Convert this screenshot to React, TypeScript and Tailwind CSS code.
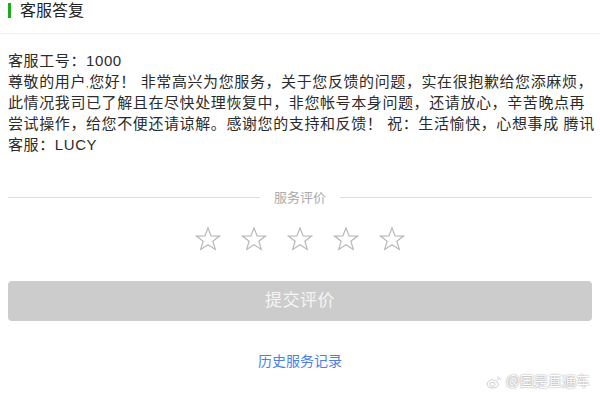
const FONT = { fontFamily: '"Liberation Sans", Arial, "Noto Sans CJK SC", sans-serif' };

/* ── Star outline ────────────────────────────────────────────── */
function StarOutline() {
  return (
    <svg width="26" height="26" viewBox="0 0 24 24" fill="none" stroke="#b8b8b8" strokeWidth="1.1" strokeLinejoin="miter">
      <polygon points="12,1.8 14.9,9.1 22.6,9.3 16.5,14.1 18.7,21.6 12,17.2 5.3,21.6 7.5,14.1 1.4,9.3 9.1,9.1" />
    </svg>
  );
}

/* ── Weibo watermark logo ────────────────────────────────────── */
function WeiboMark() {
  return (
    <svg width="16" height="14" viewBox="0 0 24 20" fill="none" stroke="#c8c8c8" strokeWidth="1.4">
      <path d="M9.5 6.5c-4.2 0.6-8 3.6-8 6.9 0 3.4 4.2 5.6 8.6 5.6 5.4 0 9-2.9 9-5.4 0-1.8-1.6-2.6-2.8-2.9 0.5-1.2 0.6-3-1.7-3.1-1.4 0-2.9 0.7-2.9 0.7s0.6-2.1-2.2-1.8z" />
      <ellipse cx="9.5" cy="13.4" rx="4.2" ry="3" />
      <path d="M17 2.5c2.4 0 4.6 2 4.6 4.6M16.8 5c1.2 0 2.2 0.9 2.2 2.1" />
    </svg>
  );
}

const REPLY_LINES = [
  "此情况我司已了解且在尽快处理恢复中，非您帐号本身问题，还请放心，辛苦晚点再",
  "尝试操作，给您不便还请谅解。感谢您的支持和反馈！ 祝：生活愉快，心想事成 腾讯",
  "客服：LUCY",
];

export default function App() {
  return (
    <div className="w-[600px] h-[400px] bg-white relative overflow-hidden text-[#333]" style={FONT}>
      {/* Header */}
      <div className="h-[34px] flex items-start pt-[3px] pl-2 border-b border-[#eeeeee]">
        <span className="w-[3px] h-[15px] bg-[#1aad19]" />
        <span className="ml-[9px] text-[16px] text-[#222] leading-[16px]">客服答复</span>
      </div>

      {/* Reply text */}
      <div className="px-2 pt-[16px] text-[15px] leading-[21px] tracking-[0.6px] text-[#2b2b2b] whitespace-nowrap">
        <div>客服工号：1000</div>
        <div className="h-[21px]">
          尊敬的用户<span className="text-[9px] leading-none">,</span>您好！ 非常高兴为您服务，关于您反馈的问题，实在很抱歉给您添麻烦，
        </div>
        {REPLY_LINES.map((line) => (
          <div key={line}>{line}</div>
        ))}
      </div>

      {/* Rating divider */}
      <div className="mt-[36px] mx-2 flex items-center gap-[14px]">
        <div className="flex-1 h-px bg-[#dddddd]" />
        <span className="text-[13px] text-[#aaaaaa] leading-[13px]">服务评价</span>
        <div className="flex-1 h-px bg-[#dddddd]" />
      </div>

      {/* Stars */}
      <div className="mt-[22px] flex justify-center gap-[20px]">
        {Array.from({ length: 5 }).map((_, i) => (
          <StarOutline key={i} />
        ))}
      </div>

      {/* Submit */}
      <div className="mt-[29px] mx-2 h-[40px] rounded-[4px] bg-[#cccccc] flex items-center justify-center">
        <span className="text-[17px] text-[#f4f4f4] tracking-[0.5px]">提交评价</span>
      </div>

      {/* History link */}
      <div className="mt-[30px] text-center text-[14px] leading-[20px] text-[#4a7fe8]">历史服务记录</div>

      {/* Watermark */}
      <div className="absolute right-[10px] bottom-[8px] flex items-center gap-[4px]">
        <WeiboMark />
        <span className="text-[14px] text-white" style={{ textShadow: "0 0 2px #999, 0 0 1px #aaa" }}>
          @国是直通车
        </span>
      </div>
    </div>
  );
}
